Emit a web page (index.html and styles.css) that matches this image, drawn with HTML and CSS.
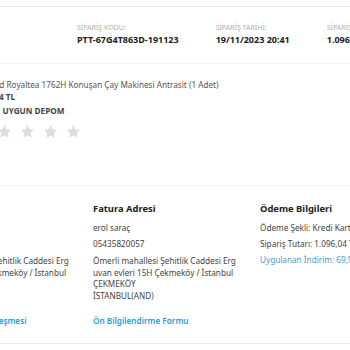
FILE: index.html
```html
<!DOCTYPE html>
<html lang="tr">
<head>
    <meta charset="UTF-8">
    <meta name="viewport" content="width=device-width, initial-scale=1.0">
    <title>Sipariş Detayı</title>
    <link rel="stylesheet" href="styles.css">
</head>
<body>
    <div class="page">
        <header class="order-head">
            <div class="head-item">
                <span class="head-label">SİPARİŞ KODU:</span>
                <span class="head-value">PTT-67G4T863D-191123</span>
            </div>
            <div class="head-item">
                <span class="head-label">SİPARİŞ TARİHİ:</span>
                <span class="head-value">19/11/2023 20:41</span>
            </div>
            <div class="head-item">
                <span class="head-label">SİPARİŞ TUTARI:</span>
                <span class="head-value">1.096,04 TL</span>
            </div>
        </header>

        <section class="product">
            <p class="product-name">Homend Royaltea 1762H Konuşan Çay Makinesi Antrasit (1 Adet)</p>
            <p class="product-price">1.096,04 TL</p>
            <p class="product-seller">Satıcı: <span class="seller-name">UYGUN DEPOM</span></p>
            <div class="stars">
                <svg class="star" viewBox="0 0 24 24"><path d="M12 1.5l3.2 6.9 7.5.9-5.5 5.2 1.4 7.4L12 18.2l-6.6 3.7 1.4-7.4-5.5-5.2 7.5-.9z"/></svg>
                <svg class="star" viewBox="0 0 24 24"><path d="M12 1.5l3.2 6.9 7.5.9-5.5 5.2 1.4 7.4L12 18.2l-6.6 3.7 1.4-7.4-5.5-5.2 7.5-.9z"/></svg>
                <svg class="star" viewBox="0 0 24 24"><path d="M12 1.5l3.2 6.9 7.5.9-5.5 5.2 1.4 7.4L12 18.2l-6.6 3.7 1.4-7.4-5.5-5.2 7.5-.9z"/></svg>
                <svg class="star" viewBox="0 0 24 24"><path d="M12 1.5l3.2 6.9 7.5.9-5.5 5.2 1.4 7.4L12 18.2l-6.6 3.7 1.4-7.4-5.5-5.2 7.5-.9z"/></svg>
                <svg class="star" viewBox="0 0 24 24"><path d="M12 1.5l3.2 6.9 7.5.9-5.5 5.2 1.4 7.4L12 18.2l-6.6 3.7 1.4-7.4-5.5-5.2 7.5-.9z"/></svg>
            </div>
        </section>

        <section class="info">
            <div class="info-col">
                <h3>Teslimat Adresi</h3>
                <p>erol saraç</p>
                <p>05435820057</p>
                <p class="address">Ömerli mahallesi Şehitlik Caddesi Erg<br>uvan evleri 15H Çekmeköy / İstanbul<br>ÇEKMEKÖY<br>İSTANBUL(AND)</p>
                <a class="info-link" href="#">Mesafeli Satış Sözleşmesi</a>
            </div>
            <div class="info-col">
                <h3>Fatura Adresi</h3>
                <p>erol saraç</p>
                <p>05435820057</p>
                <p class="address">Ömerli mahallesi Şehitlik Caddesi Erg<br>uvan evleri 15H Çekmeköy / İstanbul<br>ÇEKMEKÖY<br>İSTANBUL(AND)</p>
                <a class="info-link" href="#">Ön Bilgilendirme Formu</a>
            </div>
            <div class="info-col">
                <h3>Ödeme Bilgileri</h3>
                <p>Ödeme Şekli: Kredi Kartı</p>
                <p>Sipariş Tutarı: 1.096,04 TL</p>
                <p class="discount">Uygulanan İndirim: 69,96 TL</p>
            </div>
        </section>
    </div>
</body>
</html>
```

FILE: styles.css
```css
html,
body {
  margin: 0;
  padding: 0;
  overflow: hidden;
  background: #fff;
}

body {
  font-family: "Noto Sans", "Open Sans", sans-serif;
  color: #444;
  padding-top: 6px;
}

p {
  margin: 0;
}

.page {
  width: 700px;
}

.order-head {
  display: flex;
  gap: 37px;
  padding: 16px 0 17px 77px;
  border-top: 1px solid #e8e8e8;
}

.head-item {
  display: flex;
  flex-direction: column;
}

.head-label {
  font-size: 7px;
  line-height: 10px;
  color: #b0b0b0;
}

.head-value {
  font-size: 9px;
  line-height: 13px;
  font-weight: 700;
  color: #222;
}

.product {
  border-top: 1px solid #f3f3f3;
  margin-left: -29px;
  padding: 15px 0 46px 0;
}

.product-name {
  font-size: 8.2px;
  line-height: 12px;
  color: #555;
}

.product-price,
.product-seller {
  font-size: 8.2px;
  line-height: 12px;
  font-weight: 700;
  color: #444;
}

.product-seller {
  margin-top: 2px;
}

.seller-name {
  margin-left: 5px;
}

.stars {
  display: flex;
  gap: 8px;
  margin-top: 7px;
  padding-left: 3px;
}

.star {
  width: 15px;
  height: 15px;
  fill: #dedede;
}

.info {
  display: grid;
  grid-template-columns: 160px 160px 160px;
  column-gap: 7px;
  margin-left: -74px;
  padding: 16px 0 16px 0;
  border-top: 1px solid #f3f3f3;
  border-bottom: 1px solid #ececec;
}

.info-col {
  display: flex;
  flex-direction: column;
  align-items: flex-start;
  font-size: 8.2px;
  line-height: 12px;
  white-space: nowrap;
}

.info-col h3 {
  margin: 0;
  font-size: 9.4px;
  line-height: 14px;
  font-weight: 700;
  color: #222;
}

.info-col p {
  margin-top: 4px;
}

.info-col h3 + p {
  margin-top: 6px;
}

.info-col .address {
  margin-top: 5px;
  line-height: 11.7px;
}

.discount {
  color: #3fa0d6;
}

.info-link {
  margin-top: 13px;
  color: #2e9ad3;
  font-weight: 600;
  text-decoration: none;
}
```
